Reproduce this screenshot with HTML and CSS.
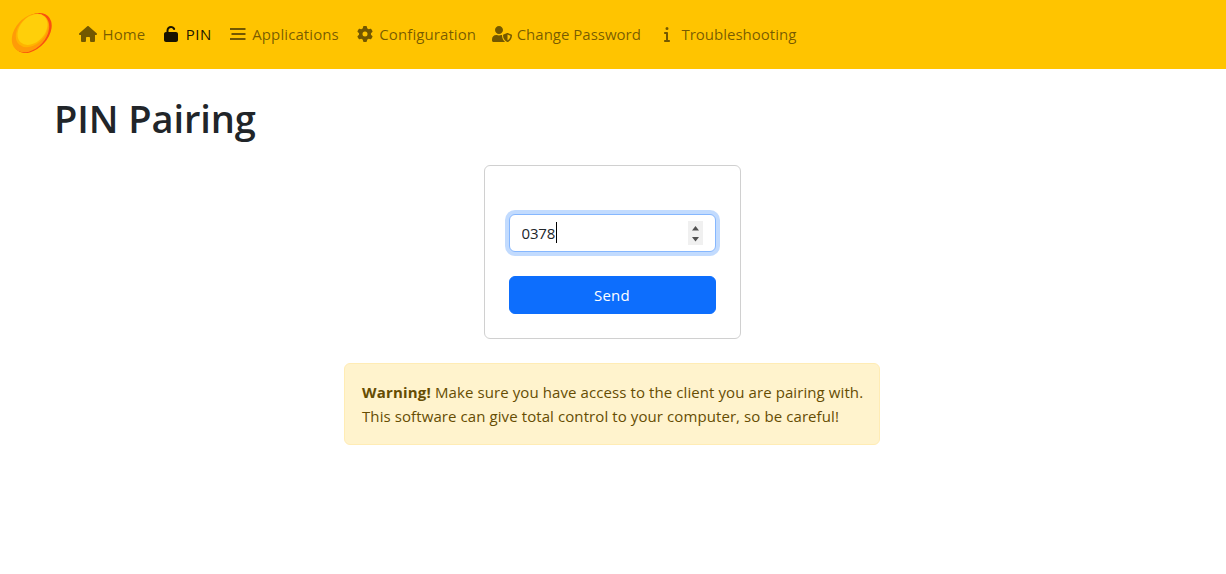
FILE: index.html
```html
<!DOCTYPE html>
<html lang="en">
<head>
<meta charset="utf-8">
<title>PIN Pairing</title>
<link rel="stylesheet" href="styles.css">
</head>
<body>
<header class="navbar">
  <svg class="logo" viewBox="0 0 41 43" aria-hidden="true">
    <ellipse class="logo-red" cx="21.5" cy="21" rx="15.5" ry="23" transform="rotate(42 21.5 21)"/>
    <ellipse class="logo-orange" cx="19.5" cy="21" rx="15.500" ry="22" transform="rotate(42 19.5 21)"/>
    <ellipse class="logo-yellow" cx="21" cy="18.5" rx="13.500" ry="19" transform="rotate(42 21 18.5)"/>
    <ellipse class="logo-core" cx="21.5" cy="17.5" rx="12.500" ry="17.500" transform="rotate(42 21.5 17.5)"/>
  </svg>
  <nav class="nav">
    <a class="nav-link" href="#"><span class="ico"><svg viewBox="0 0 576 512" class="w18"><path d="M575.8 255.5c0 18-15 32.1-32 32.1h-32l.7 160.2c0 2.7-.2 5.4-.5 8.1V472c0 22.1-17.9 40-40 40H456c-1.1 0-2.2 0-3.3-.1c-1.4 .1-2.8 .1-4.2 .1H416 392c-22.1 0-40-17.9-40-40V448 384c0-17.7-14.3-32-32-32H256c-17.7 0-32 14.3-32 32v64 24c0 22.1-17.9 40-40 40H160 128.1c-1.5 0-3-.1-4.5-.2c-1.2 .1-2.4 .2-3.6 .2H104c-22.1 0-40-17.9-40-40V360c0-.9 0-1.9 .1-2.8V287.6H32c-18 0-32-14-32-32.1c0-9 3-17 10-24L266.4 8c7-7 15-8 22-8s15 2 21 7L564.8 231.5c8 7 12 15 11 24z"/></svg></span>Home</a>
    <a class="nav-link active" href="#"><span class="ico"><svg viewBox="0 0 448 512" class="w14"><path d="M144 144c0-44.2 35.8-80 80-80c31.9 0 59.4 18.6 72.3 45.7c7.6 16 26.7 22.8 42.6 15.2s22.8-26.7 15.2-42.6C331 33.7 281.5 0 224 0C144.5 0 80 64.5 80 144v48H64c-35.3 0-64 28.7-64 64V448c0 35.3 28.7 64 64 64H384c35.3 0 64-28.7 64-64V256c0-35.3-28.7-64-64-64H144V144z"/></svg></span>PIN</a>
    <a class="nav-link" href="#"><span class="ico"><svg viewBox="0 0 16 16" class="w16"><path d="M0 2h15.500v2H0zM1.500 7h14v2H1.500zM0 12h15.500v2H0z"/></svg></span>Applications</a>
    <a class="nav-link" href="#"><span class="ico"><svg viewBox="0 0 512 512" class="w16"><path d="M495.9 166.6c3.2 8.7 .5 18.4-6.4 24.6l-43.3 39.4c1.1 8.3 1.7 16.8 1.7 25.4s-.6 17.1-1.7 25.4l43.3 39.4c6.9 6.2 9.6 15.9 6.4 24.6c-4.4 11.9-9.7 23.3-15.8 34.3l-4.7 8.1c-6.6 11-14 21.4-22.1 31.2c-5.9 7.2-15.7 9.6-24.5 6.8l-55.7-17.7c-13.4 10.3-28.2 18.9-44 25.4l-12.5 57.1c-2 9.1-9 16.3-18.2 17.8c-13.8 2.3-28 3.5-42.5 3.5s-28.7-1.2-42.5-3.5c-9.2-1.5-16.2-8.7-18.2-17.8l-12.5-57.1c-15.8-6.5-30.6-15.1-44-25.4L83.1 425.9c-8.8 2.8-18.6 .3-24.5-6.8c-8.1-9.8-15.5-20.2-22.1-31.2l-4.7-8.1c-6.1-11-11.4-22.4-15.8-34.3c-3.2-8.7-.5-18.4 6.4-24.6l43.3-39.4C64.6 273.1 64 264.6 64 256s.6-17.1 1.7-25.4L22.4 191.2c-6.9-6.2-9.6-15.9-6.4-24.6c4.4-11.9 9.7-23.3 15.8-34.3l4.7-8.1c6.6-11 14-21.4 22.1-31.2c5.9-7.2 15.7-9.6 24.5-6.8l55.7 17.7c13.4-10.3 28.2-18.9 44-25.4l12.5-57.1c2-9.1 9-16.3 18.2-17.8C227.3 1.2 241.5 0 256 0s28.7 1.2 42.5 3.5c9.2 1.5 16.2 8.7 18.2 17.8l12.5 57.1c15.8 6.5 30.6 15.1 44 25.4l55.7-17.7c8.8-2.8 18.6-.3 24.5 6.8c8.1 9.8 15.5 20.2 22.1 31.2l4.7 8.1c6.1 11 11.4 22.4 15.8 34.3zM256 336a80 80 0 1 0 0-160 80 80 0 1 0 0 160z"/></svg></span>Configuration</a>
    <a class="nav-link tight" href="#"><span class="ico"><svg viewBox="0 0 640 512" class="w20"><path d="M622.3 271.1l-115.2-45c-4.1-1.6-12.6-3.7-22.2 0l-115.2 45c-10.7 4.2-17.7 14-17.7 24.9 0 111.6 68.7 188.8 132.9 213.9 9.6 3.7 18 1.6 22.2 0C558.4 489.9 640 420.5 640 296c0-10.9-7-20.7-17.7-24.9zM496 462.4V273.3l95.5 37.3c-5.6 87.1-60.9 135.4-95.5 151.8zM224 256c70.7 0 128-57.3 128-128S294.7 0 224 0 96 57.3 96 128s57.3 128 128 128zm96 40c0-2.5.8-4.7 1.1-7.2-2.5-.1-4.9-.8-7.5-.8h-16.7c-22.2 10.2-46.9 16-72.9 16s-50.6-5.8-72.9-16h-16.7C60.2 288 0 348.2 0 422.4V464c0 26.5 21.5 48 48 48h352c6.8 0 13.3-1.5 19.2-4-54-42.9-99.2-116.7-99.2-212z"/></svg></span>Change Password</a>
    <a class="nav-link tight" href="#"><span class="ico"><svg viewBox="0 0 192 512" class="w6"><path d="M48 80a48 48 0 1 1 96 0A48 48 0 1 1 48 80zM0 224c0-17.700 14.300-32 32-32H96c17.700 0 32 14.300 32 32V448h32c17.700 0 32 14.300 32 32s-14.300 32-32 32H32c-17.700 0-32-14.300-32-32s14.300-32 32-32H64V256H32c-17.700 0-32-14.300-32-32z"/></svg></span>Troubleshooting</a>
  </nav>
</header>
<main class="container">
  <h1 class="title">PIN Pairing</h1>
  <form class="pin-form">
    <div class="field">
      <input class="pin-input" type="number" value="0378" autofocus>
      <span class="caret"></span>
      <svg class="spin" viewBox="0 0 15 24" aria-hidden="true"><path d="M7.500 5l3.500 4.500h-7zM7.500 20.500l-3.500-4.500h7z"/></svg>
    </div>
    <button class="send" type="button">Send</button>
  </form>
  <div class="alert"><b>Warning!</b> Make sure you have access to the client you are pairing with.<br>This software can give total control to your computer, so be careful!</div>
</main>
</body>
</html>
```
FILE: styles.css
```css
* { box-sizing: border-box; }
html, body { margin: 0; height: 100%; }
body {
  font-family: "Open Sans", "Noto Sans", sans-serif;
  font-size: 15px;
  line-height: 24px;
  letter-spacing: .09px;
  color: #212529;
  background: #fff;
}
.navbar {
  display: flex;
  align-items: center;
  height: 69px;
  padding: 0 0 2px 11px;
  background: #ffc400;
}
.logo { width: 41px; height: 43px; margin-right: 18px; flex: none; }
.logo-red { fill: #f9500f; }
.logo-orange { fill: #ff9b07; }
.logo-yellow { fill: #ffb400; }
.logo-core { fill: #ffcf0a; }
.nav { display: flex; }
.nav-link {
  display: flex;
  align-items: center;
  padding: 8px;
  color: rgba(0, 0, 0, .55);
  fill: rgba(0, 0, 0, .55);
  text-decoration: none;
  white-space: nowrap;
}
.nav-link.tight { letter-spacing: 0; }
.nav-link.active {
  color: rgba(0, 0, 0, .9);
  fill: rgba(0, 0, 0, .9);
  font-weight: 500;
  letter-spacing: .5px;
}
.ico { display: flex; justify-content: center; align-items: center; width: 20px; height: 16px; margin-right: 4.5px; flex: none; }
.ico svg { height: 16px; flex: none; }
.w18 { width: 18px; }
.w14 { width: 14px; }
.w16 { width: 16px; }
.w20 { width: 20px; }
.w6 { width: 6px; }
.container { width: 1140px; margin: 0 auto; padding: 0 13px 0 11px; }
.title { margin: 0; padding-top: 25px; font-size: 38px; line-height: 48px; font-weight: 600; letter-spacing: -.1px; }
.pin-form {
  display: flex;
  flex-direction: column;
  width: 257px;
  margin: 23px auto 0;
  padding: 48px 24px 24px;
  border: 1px solid #d0d0d0;
  border-radius: 6px;
}
.field { position: relative; height: 38px; }
.pin-input {
  display: block;
  height: 38px;
  width: 100%;
  padding: 6px 12px;
  font: inherit;
  letter-spacing: -.15px;
  color: #212529;
  background: #fff;
  border: 1px solid #86b7fe;
  border-radius: 6px;
  outline: 0;
  box-shadow: 0 0 0 4px #c2dbfe;
  caret-color: transparent;
  appearance: textfield;
}
.pin-input::-webkit-inner-spin-button { display: none; }
.caret {
  position: absolute;
  left: 47px;
  top: 8px;
  width: 1px;
  height: 21px;
  background: #000;
}
.spin {
  position: absolute;
  right: 13px;
  top: 7px;
  width: 15px;
  height: 24px;
  background: #f0f0f0;
  fill: #505050;
}
.send {
  height: 38px;
  margin-top: 24px;
  font: inherit;
  letter-spacing: .3px;
  color: #fff;
  background: #0d6efd;
  border: 1px solid #0d6efd;
  border-radius: 6px;
}
.alert {
  width: 536px;
  margin: 24px auto 0;
  padding: 16px 15px 16px 17px;
  color: #664d03;
  background: #fff3cd;
  border: 1px solid #ffecb5;
  border-radius: 6px;
  white-space: nowrap;
}
.alert b { letter-spacing: .2px; }
```
